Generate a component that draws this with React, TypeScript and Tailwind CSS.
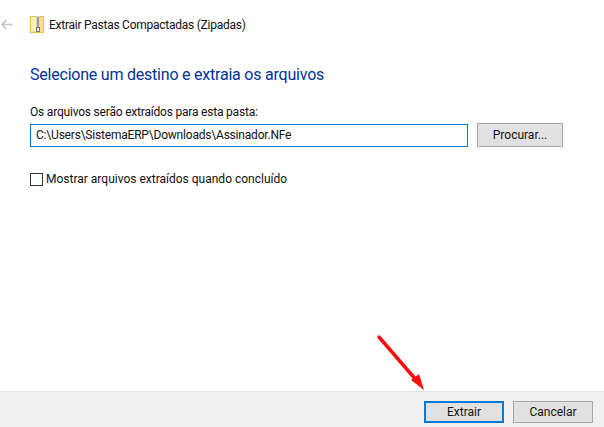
import React from "react";

const font = "font-['Roboto','Noto_Sans',sans-serif]";

function ZipFolder() {
  return (
    <svg width="14" height="17" viewBox="0 0 14 17" className="block">
      <rect x="0.5" y="0.5" width="13" height="16" fill="#fbe08a" stroke="#e9c04e" />
      <rect x="1" y="1" width="5" height="14" fill="#fdeeb4" />
      <rect x="6" y="0" width="4" height="12" fill="#d6d6d6" />
      <path d="M8 1v1M7 3h2M8 4v1M7 6h2M8 7v1M7 9h2M8 10v1" stroke="#5f5f5f" strokeWidth="1" />
      <rect x="6.5" y="11.5" width="3" height="4" fill="#e8e8e8" stroke="#777" />
    </svg>
  );
}

function Btn({ label, focused }: { label: string; focused?: boolean }) {
  return (
    <button
      className={
        focused
          ? "w-[80px] h-[22px] bg-[#e1e1e1] border-2 border-[#0078d7] text-[12px] text-[#111]"
          : "w-[80px] h-[22px] bg-[#e1e1e1] border border-[#a6a6a6] text-[12px] text-[#111]"
      }
    >
      {label}
    </button>
  );
}

export default function App() {
  return (
    <div className={`relative w-[604px] h-[427px] bg-white flex flex-col overflow-hidden ${font}`}>
      <div className="h-[49px] flex items-center shrink-0">
        <svg width="12" height="11" viewBox="0 0 12 11" className="ml-[1px]">
          <path d="M11.5 5.5H1.5M5.5 1L1 5.5L5.5 10" fill="none" stroke="#c4c4c4" strokeWidth="1.6" />
        </svg>
        <div className="ml-[17px]">
          <ZipFolder />
        </div>
        <span className="ml-[5px] text-[12px] tracking-[-0.25px] text-[#111]">Extrair Pastas Compactadas (Zipadas)</span>
      </div>

      <div className="flex-1 pl-[30px] pt-[15px]">
        <h1 className="text-[16px] leading-[22px] tracking-[-0.22px] text-[#003399]">Selecione um destino e extraia os arquivos</h1>
        <p className="mt-[18px] text-[12px] leading-[16px] tracking-[-0.2px] text-[#111]">Os arquivos serão extraídos para esta pasta:</p>
        <div className="mt-[3px] flex items-center">
          <div className="w-[438px] h-[23px] border border-[#0078d7] pl-[5px] flex items-center text-[12px] tracking-[-0.2px] text-[#111]">
            C:\Users\SistemaERP\Downloads\Assinador.NFe
          </div>
          <button className="ml-[9px] w-[86px] h-[24px] bg-[#e1e1e1] border border-[#a6a6a6] text-[12px] text-[#111]">
            Procurar...
          </button>
        </div>
        <label className="mt-[23px] flex items-center text-[12px] text-[#111]">
          <span className="w-[13px] h-[13px] border border-[#333] bg-white" />
          <span className="ml-[3px]">Mostrar arquivos extraídos quando concluído</span>
        </label>
      </div>

      <div className="h-[36px] shrink-0 bg-[#f0f0f0] border-t border-[#dfdfdf] flex items-start justify-end gap-[9px] pt-[9px] pr-[11px]">
        <Btn label="Extrair" focused />
        <Btn label="Cancelar" />
      </div>

      <svg width="60" height="66" viewBox="0 0 60 66" className="absolute left-[372px] top-[330px]">
        <path d="M7 7L45 51" stroke="#f50f0f" strokeWidth="3.5" strokeLinecap="round" />
        <path d="M52 60L39 50L47 44Z" fill="#f50f0f" />
      </svg>
    </div>
  );
}
